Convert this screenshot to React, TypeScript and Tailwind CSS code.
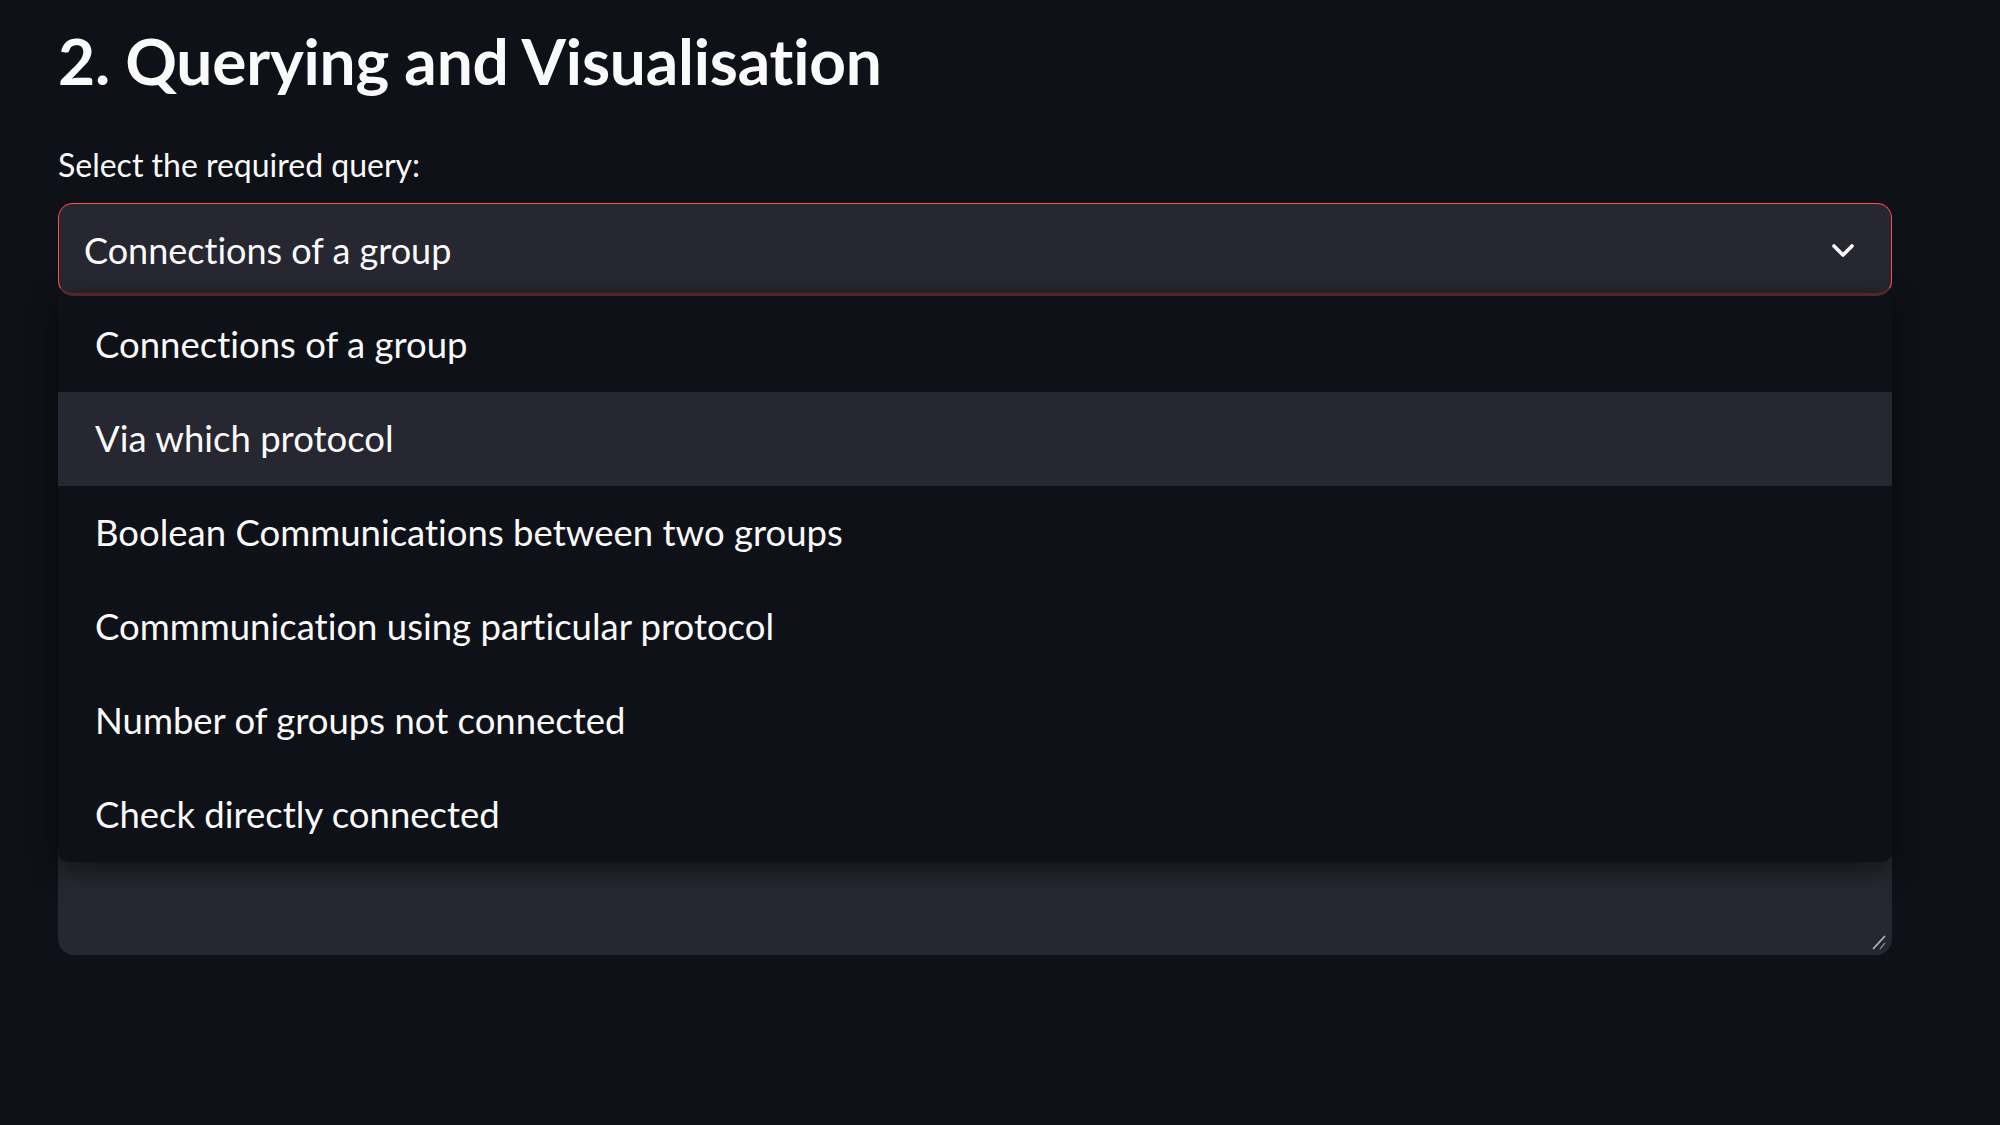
import React from "react";

const options = [
  "Connections of a group",
  "Via which protocol",
  "Boolean Communications between two groups",
  "Commmunication using particular protocol",
  "Number of groups not connected",
  "Check directly connected",
];

function Chevron() {
  return (
    <svg width="24" height="15" viewBox="0 0 24 15" fill="none" className="mt-[3px]">
      <polyline
        points="3,3 12,12 21,3"
        stroke="#fafafa"
        strokeWidth="3.6"
        strokeLinecap="round"
        strokeLinejoin="round"
      />
    </svg>
  );
}

function ResizeHandle() {
  return (
    <svg width="18" height="18" viewBox="0 0 18 18" fill="none">
      <line x1="3" y1="16" x2="15" y2="3" stroke="#111318" strokeWidth="4" />
      <line x1="3" y1="16" x2="15" y2="3" stroke="#a3a3a8" strokeWidth="2" />
      <line x1="10" y1="16" x2="15" y2="10" stroke="#111318" strokeWidth="3" />
      <line x1="10" y1="16" x2="15" y2="10" stroke="#8a8a90" strokeWidth="1.5" />
    </svg>
  );
}

export default function App() {
  const highlighted = 1;

  return (
    <div
      className="min-h-screen w-full bg-[#0e1117] text-[#fafafa] [font-variant-ligatures:none]"
      style={{ fontFamily: "Lato, 'Noto Sans', sans-serif" }}
    >
      <div className="w-[1892px] pl-[58px] pt-[23px]">
        <h2 className="text-[64px] font-bold leading-[1.2] tracking-[-0.2px]">
          2. Querying and Visualisation
        </h2>

        <div className="mt-[46px] text-[32px] leading-[1.2]">
          Select the required query:
        </div>

        <div className="relative z-10 mt-[19px]">
          <div className="flex h-[93px] items-center justify-between rounded-[15px] border border-[#ff4b4b] border-b-[3px] border-b-[#6a2a31] bg-[#262730] pl-[25px] pr-[36px]">
            <span className="pt-[3px] text-[36px] leading-[1.2]">
              Connections of a group
            </span>
            <Chevron />
          </div>

          <div className="absolute left-0 right-0 top-full rounded-b-[10px] bg-[#0e1117] pt-[2px] shadow-[0_6px_28px_rgba(0,0,0,0.55)]">
            {options.map((opt, i) => (
              <div
                key={opt}
                className={
                  "flex h-[94px] items-center pl-[37px] text-[36.5px] leading-[1.2] " +
                  (i === highlighted ? "bg-[#262730]" : "")
                }
              >
                {opt}
              </div>
            ))}
          </div>
        </div>

        <div className="relative mt-[36px] h-[623px] rounded-[16px] bg-[#262730]">
          <div className="absolute bottom-[4px] right-[4px]">
            <ResizeHandle />
          </div>
        </div>
      </div>
    </div>
  );
}
